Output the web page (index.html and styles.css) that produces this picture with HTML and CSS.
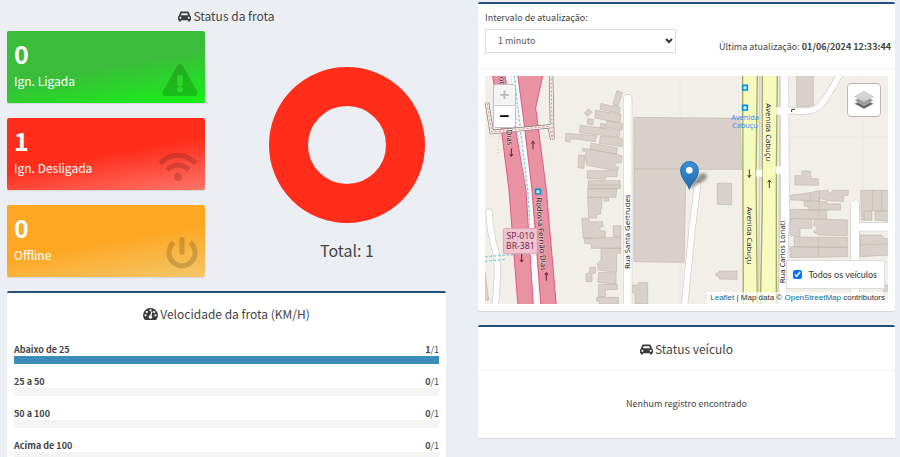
FILE: index.html
```html
<!DOCTYPE html>
<html lang="pt-BR">
<head>
<meta charset="utf-8">
<meta name="viewport" content="width=device-width, initial-scale=1">
<title>Status da frota</title>
<link rel="stylesheet" href="styles.css">
</head>
<body>
<svg class="defs" aria-hidden="true">
  <symbol id="car" viewBox="0 0 39 32">
    <path fill-rule="evenodd" d="M10 1h19q3 0 4 3l3 9q3 2 3 5v9h-3v2q0 3-3 3t-3-3v-2H9v2q0 3-3 3t-3-3v-2H0v-9q0-3 3-5l3-9q1-3 4-3zM9 12h21l-2-6H11zM7 17a3 3 0 1 0 .1 0zM32 17a3 3 0 1 0 .1 0z"/>
  </symbol>
</svg>
<main class="page">
  <div class="column">
    <section class="fleet">
      <h2 class="title"><svg class="icon-car"><use href="#car"/></svg>Status da frota</h2>
      <div class="fleet-grid">
        <div class="cards">
          <div class="card card-on">
            <strong>0</strong><span>Ign. Ligada</span>
            <svg class="card-icon icon-warning" viewBox="0 0 36 32"><path fill-rule="evenodd" d="M15.500 1.500q2.500-3 5 0L35 27q2 4-2 5H3q-4-1-2-5zM15 11l.5 11h5l.5-11zM18 22.500a3 3 0 1 0 .1 0z"/></svg>
          </div>
          <div class="card card-off">
            <strong>1</strong><span>Ign. Desligada</span>
            <svg class="card-icon icon-wifi" viewBox="0 0 40 28"><circle cx="20" cy="24" r="4"/><path class="line" d="M2 10.500q18-17 36 0M9 17q11-10 22 0"/></svg>
          </div>
          <div class="card card-offline">
            <strong>0</strong><span>Offline</span>
            <svg class="card-icon icon-power" viewBox="0 0 32 32"><path class="line" d="M8 5.500a13 13 0 1 0 16 0"/><path class="line round" d="M16 2.500v13"/></svg>
          </div>
        </div>
        <div class="chart">
          <svg viewBox="0 0 156 156" role="img" aria-label="Ign. Desligada: 1"><circle cx="78" cy="78" r="58.500"/></svg>
          <p>Total: 1</p>
        </div>
      </div>
    </section>
    <section class="box">
      <h2 class="title speed-title"><svg class="icon-gauge" viewBox="0 0 44 36"><path fill-rule="evenodd" d="M22 0a22 22 0 0 1 18.500 34q-1 2-3 2h-31q-2 0-3-2A22 22 0 0 1 22 0zM7 19a3 3 0 1 0 .1 0zM11 9a3 3 0 1 0 .1 0zM22 4a3 3 0 1 0 .1 0zM33 9a3 3 0 1 0 .1 0zM37 19a3 3 0 1 0 .1 0zM25 10l-4 12a5 5 0 1 0 4 1l3-12z"/></svg>Velocidade da frota (KM/H)</h2>
      <ul class="speeds">
        <li><div class="speed-row"><strong>Abaixo de 25</strong><span><b>1</b>/1</span></div><div class="bar"><div class="fill" style="width:100%"></div></div></li>
        <li><div class="speed-row"><strong>25 a 50</strong><span><b>0</b>/1</span></div><div class="bar"></div></li>
        <li><div class="speed-row"><strong>50 a 100</strong><span><b>0</b>/1</span></div><div class="bar"></div></li>
        <li><div class="speed-row"><strong>Acima de 100</strong><span><b>0</b>/1</span></div><div class="bar"></div></li>
      </ul>
    </section>
  </div>

  <div class="column column-map">
    <section class="box">
      <div class="toolbar">
        <div class="field">
          <label for="interval">Intervalo de atualização:</label>
          <div class="select-wrap">
            <select id="interval"><option>1 minuto</option></select>
            <svg viewBox="0 0 8 6"><path d="M1 1l3 3 3-3"/></svg>
          </div>
        </div>
        <p class="updated">Última atualização: <strong>01/06/2024 12:33:44</strong></p>
      </div>
      <div class="map-body">
        <div class="map">
          <svg class="tiles" viewBox="0 0 1209 684" preserveAspectRatio="xMidYMid slice">
            <rect class="land" width="1209" height="684"/>
            <g class="grid-line"><path d="M585 0v684M0 184h1209M1135 0v684"/></g>

            <!-- houses, north-west -->
            <g class="building" transform="translate(-15 -18)">
              <path d="M411 62l17 6-14 40-16-6zM324 117l13 10-15 12-9-9zM363 100l32 8 6-2 19 6-2 18-58-12zM347 121l76 12-3 25-76-14zM323 146l18 2-2 16-18-2zM381 152l47 9-2 19-48-8zM301 166l51 6 68 10-3 20-119-14zM362 160l15 2-2 14-15-2zM258 190l92 7-4 18-54-7-20-1-2 9-14-2zM362 198l65 8-1 24-68-10zM333 219l79 15-2 18-80-14zM308 235l17 2 85 15 16 6-2 20-19 2v10l11 2-2 8-29-2-65-12-4-24 2-18-12-1zM296 256h18l-2 39-18-1zM322 302h90v18h-34l-2 8-54-2zM325 332h95v23h-95z"/>
            </g>
            <!-- houses, south-west -->
            <g class="building" transform="translate(-15 327)">
              <path d="M325 0h95v10h-95zM323 12h87l-2 25h-85zM323 37l43 1-1 32-3 0v18h-12v12l-24-2zM372 38h14v10h-14zM305 100h21l2 10h40l2 15h-10v12l16 1v19l-66 3zM400 122h23l-1 33h-22zM312 160l110-3v33h-88v-13l-20-2zM363 190h59v15h-12v57l-55-7-3-20 11-10zM330 247h18l-2 17-10 2v24h-18v-24l10-2zM356 262l52 2v33l-54-5zM356 298h56v15l-36 2v20h-20zM350 337h65v20h-57v-9h-8zM457 300h18v-7h28v64h-38v-32l-8-3zM15 262l11 83H10z"/>
            </g>
            <path class="building" d="M447 124l318 3 5 153H603l-6 279-150-2zM447 279h156"/>
            <!-- houses, east -->
            <g class="building" transform="translate(600 162)">
              <path d="M97 160h43v65l-43-2zM330 137h21v-14h25l2 22 23 2-1 19-70-1zM317 195l28-2 30-5 28-6h27v11l15-12h45l-1 15-14 1v17l-45-2-27-7v8l-86-3zM375 188v24M358 213l67 2 2 7h40l-1 18h-96v-10l-12-2zM317 238l108 2v28H317zM403 182v80M527 181h90v62l-57-1v28h-31zM563 181v61M590 181v61"/>
            </g>
            <g class="building" transform="translate(600 417)">
              <path d="M92 175l11-3v-4h53v25l-53-1v-7l-10-3zM315 10l65 2v28h-35v25l-30-3zM390 12l97 3v47l-87-2-15-10 15-10-15-10zM328 67h159v30l-87 0-72-2zM315 95l172 2v28l-172 3zM400 67v60M537-12h23v27h-23zM570-12h47v32l-47-5zM525 60h65l5 10 22 2v48l-92 5zM525 90l84-4M596 210h20v40h-20z"/>
            </g>
            <path class="building" d="M935-4h50v94l-50 4z"/>

            <!-- minor streets -->
            <g class="casing">
              <path d="M12 408q4 70 18 110t0 180M638 325l-14 110-26 260M897 104h30c70 8 80-14 105-52l36-62"/>
            </g>
            <path class="casing-wide" d="M428 68V700M898-10l2 420-3 90-8 200M1110 385v310M1110 452h110"/>
            <g class="street">
              <path d="M12 408q4 70 18 110t0 180M638 325l-14 110-26 260M897 104h30c70 8 80-14 105-52l36-62"/>
            </g>
            <path class="street-wide" d="M428 68V700M898-10l2 420-3 90-8 200M1110 385v310M1110 452h110"/>

            <!-- avenue -->
            <g class="avenue">
              <path d="M773-5h44l-4 300 4 395h-42zM832-5h45l-3 300v395h-48l6-300z"/>
            </g>
            <path class="kerb" d="M824-5v300l-4 395M884-5v300l-4 395"/>
            <path class="link" d="M814 292h18M872 282h22M874 105h22"/>

            <!-- highway -->
            <path class="verge" d="M60-5l34 180 28 180 16 335h24L142 342 118 132 98-5z"/>
            <g class="highway">
              <path d="M22-5h37l33 167 31 180 22 348h-46L72 342 50 168zM98-5h76l-22 101 32 246 30 348h-46L141 342 116 132z"/>
            </g>
            <g class="cycle">
              <path d="M88 0l18 160 22 182 6 90M0 542l160-12M0 556l60-6"/>
            </g>
            <path class="dots" d="M78 0l20 160 22 182M28 70l16 90-6 80"/>
            <path class="bridge-casing" d="M198-5l4 196-8-40L20 168 6 80"/>
            <path class="bridge" d="M198-5l4 196-8-40L20 168 6 80"/>
            <path class="bridge-dots" d="M198-5l4 196-8-40L20 168 6 80"/>

            <!-- direction arrows -->
            <g class="arrow">
              <path d="M79 217v24m-5-7l5 7 5-7M144 220v-24m-5 7l5-7 5 7M110 534v24m-5-7l5 7 5-7M184 614v-24m-5 7l5-7 5 7"/>
            </g>
            <g class="arrow arrow-dark">
              <path d="M793 280v24m-5-7l5 7 5-7M853 336v-24m-5 7l5-7 5 7M920 108v-8h10"/>
            </g>

            <g class="stop">
              <path d="M773 28h14v14h-14zM773 88h14v14h-14zM152 340h14v14h-14z"/>
            </g>
            <g class="stop-label"><text x="780" y="132">Avenida</text><text x="780" y="157">Cabuçu</text></g>

            <rect class="shield" x="55" y="457" width="102" height="76" rx="5"/>
            <g class="shield-text"><text x="106" y="490">SP-010</text><text x="106" y="520">BR-381</text></g>

            <g class="street-name">
              <text transform="translate(843 82) rotate(90)">Avenida Cabuçu</text>
              <text transform="translate(785 392) rotate(90)">Avenida Cabuçu</text>
              <text transform="translate(901 622) rotate(-90)">Rua Carlos Lonati</text>
              <text transform="translate(435 579) rotate(-90)">Rua Santa Gertrudes</text>
              <text transform="translate(153 365) rotate(86)">Rodovia Fernão Dias</text>
              <text transform="translate(64 162) rotate(86)">Dias</text>
              <text transform="translate(42 3) rotate(84)">od</text>
            </g>
            <defs>
              <linearGradient id="pin" x2="0" y2="1"><stop stop-color="#3a93d6"/><stop offset="1" stop-color="#1f68ab"/></linearGradient>
              <filter id="soft"><feGaussianBlur stdDeviation="5"/></filter>
            </defs>
            <path class="pin-shadow" d="M614 338l22-34q14-18 26-10t-8 22z"/>
            <path class="pin" d="M613 340c-4-16-26-32-26-57a26 26 0 0 1 53 0c0 25-23 41-27 57z"/>
            <circle class="pin-eye" cx="613" cy="283" r="10"/>
          </svg>
          <div class="zoom">
            <button type="button" disabled aria-label="Aproximar">+</button>
            <button type="button" aria-label="Afastar">−</button>
          </div>
          <button class="layers" type="button" aria-label="Camadas">
            <svg viewBox="0 0 60 54"><path fill="#666" d="M2 38l28-14 28 14-28 15z"/><path fill="#999" stroke="#fff" d="M1 28l29-14 29 14-29 16z"/><path fill="#d2d2d2" stroke="#aaa" d="M1 17L30 1l29 16-29 16z"/></svg>
          </button>
          <div class="map-foot">
            <label class="all"><input type="checkbox" checked>Todos os veículos</label>
            <div class="credit"><a href="#">Leaflet</a> | Map data © <a href="#">OpenStreetMap</a> contributors</div>
          </div>
        </div>
      </div>
    </section>
    <section class="box">
      <h2 class="title vehicle-title"><svg class="icon-car"><use href="#car"/></svg>Status veículo</h2>
      <p class="empty">Nenhum registro encontrado</p>
    </section>
  </div>
</main>
</body>
</html>
```
FILE: styles.css
```css
* { box-sizing: border-box; }
html { height: 100%; overflow: hidden; }
body {
  margin: 0;
  background: #ebeef3;
  color: #444;
  font: 9px/12px "Noto Sans CJK SC", "Noto Sans", sans-serif;
}
h2, p, ul { margin: 0; padding: 0; }
.defs { position: absolute; width: 0; height: 0; }

.page {
  display: grid;
  grid-template-columns: 439fr 417fr;
  gap: 32px;
  align-items: start;
  padding: 0 5px 0 7px;
}
.column { display: flex; flex-direction: column; gap: 14px; min-width: 0; }
.column-map { padding-top: 2px; }

.box {
  background: #fff;
  border-top: 2px solid #24507a;
  border-radius: 2px;
  box-shadow: 0 1px 1px rgba(0, 0, 0, .1);
}
.title {
  display: flex;
  justify-content: center;
  align-items: center;
  gap: 2px;
  font-size: 12px;
  line-height: 16px;
  font-weight: 400;
}
.title svg { fill: #3c3c3c; }
.icon-car { width: 13px; height: 11px; }
.icon-gauge { width: 15px; height: 12px; }

.fleet { padding-top: 8px; }
.fleet-grid {
  display: grid;
  grid-template-columns: 1fr 1fr;
  gap: 43px;
  margin-top: 7px;
}
.cards { display: flex; flex-direction: column; gap: 15px; }
.card {
  position: relative;
  display: flex;
  flex-direction: column;
  height: 72px;
  padding: 9px 7px;
  border-radius: 2px;
  box-shadow: 0 1px 1px rgba(0, 0, 0, .1);
  color: #fff;
}
.card strong { font-size: 25px; line-height: 26px; }
.card span { margin-top: 7px; font-size: 12px; line-height: 16px; }
.card-on { background: linear-gradient(170deg, #3bbd3b 50%, #14f214); }
.card-off { background: linear-gradient(170deg, #ff2d1a 50%, #ff766b); }
.card-offline { background: linear-gradient(170deg, #fea722 50%, #f3c76a); }
.card-icon { position: absolute; right: 7px; fill: #000; opacity: .16; }
.card-icon .line { fill: none; stroke: #000; stroke-width: 5; }
.card-icon .round { stroke-linecap: round; }
.icon-warning { width: 36px; height: 32px; bottom: 7px; }
.icon-wifi { width: 40px; height: 28px; bottom: 9px; }
.icon-power { width: 32px; height: 32px; bottom: 8px; }

.chart { display: flex; flex-direction: column; align-items: center; padding-top: 36px; }
.chart svg { width: 156px; height: 156px; }
.chart circle { fill: none; stroke: #ff2d1a; stroke-width: 39; }
.chart p { margin-top: 17px; font-size: 16px; line-height: 20px; }

.speed-title { padding: 13px 0; }
.speeds { list-style: none; padding: 9px 7px; }
.speeds li { margin-bottom: 12px; }
.speed-row { display: flex; justify-content: space-between; }
.bar { height: 8px; background: #f4f4f4; }
.fill { height: 100%; background: #3c8dbc; }

.toolbar {
  display: flex;
  justify-content: space-between;
  align-items: flex-end;
  padding: 8px 4px 15px 7px;
  border-bottom: 1px solid #f4f4f4;
}
.field { width: 191px; }
.field label { display: block; margin-bottom: 5px; }
.select-wrap { position: relative; }
.select-wrap select {
  display: block;
  width: 100%;
  height: 24px;
  padding: 0 12px;
  appearance: none;
  border: 1px solid #d8dce4;
  border-radius: 0;
  background: #fff;
  color: #555;
  font: inherit;
}
.select-wrap svg {
  position: absolute;
  right: 3px;
  top: 9px;
  width: 8px;
  height: 6px;
  fill: none;
  stroke: #333;
  stroke-width: 2;
  pointer-events: none;
}
.updated { white-space: nowrap; }

.map-body { padding: 7px; }
.map { position: relative; height: 228px; overflow: hidden; }
.tiles { display: block; width: 100%; height: 100%; font-family: "Noto Sans", sans-serif; }
.land { fill: #f2efe9; }
.grid-line { stroke: #e9e6e0; stroke-width: 2; }
.building { fill: #d9d0c9; stroke: #c4b6ab; stroke-width: 2; }
.casing, .casing-wide, .street, .street-wide, .kerb, .link { fill: none; stroke-linecap: round; }
.casing { stroke: #cfcdca; stroke-width: 21; }
.casing-wide { stroke: #cfcdca; stroke-width: 28; }
.street { stroke: #fff; stroke-width: 17; }
.street-wide { stroke: #fff; stroke-width: 24; }
.kerb { stroke: #d4d2cd; stroke-width: 5; }
.link { stroke: #fff; stroke-width: 22; stroke-linecap: butt; }
.avenue { fill: #f7fabf; stroke: #a3ad5c; stroke-width: 4; }
.verge { fill: #fafafa; }
.highway { fill: #e892a2; stroke: #dc5a86; stroke-width: 3; }
.cycle { fill: none; stroke: #86cbd8; stroke-width: 4; stroke-dasharray: 8 5; }
.dots { fill: none; stroke: #f2a39b; stroke-width: 3; stroke-dasharray: 3 7; }
.bridge-casing { fill: none; stroke: #777; stroke-width: 13; }
.bridge { fill: none; stroke: #f6f3f0; stroke-width: 9; }
.bridge-dots { fill: none; stroke: #e98d86; stroke-width: 3; stroke-dasharray: 7 5; }
.arrow { fill: none; stroke: #6b1839; stroke-width: 3; }
.arrow-dark { stroke: #3f4415; }
.stop { fill: #d7f0fa; stroke: #0092da; stroke-width: 5; }
.stop-label { fill: #3d88f5; font-size: 22px; text-anchor: middle; }
.shield { fill: #eec4cf; stroke: #d991a6; stroke-width: 2; }
.shield-text { fill: #76284a; font-size: 26px; text-anchor: middle; }
.street-name { fill: #222; font-size: 23px; stroke: #fff; stroke-width: 3; stroke-opacity: .5; paint-order: stroke; }
.pin { fill: url(#pin); stroke: #2468a5; stroke-width: 3; }
.pin-eye { fill: #fff; }
.pin-shadow { fill: #000; opacity: .4; filter: url(#soft); }

.zoom {
  position: absolute;
  left: 8px;
  top: 8px;
  display: flex;
  flex-direction: column;
  width: 23px;
  border: 1px solid #c4bfba;
  border-radius: 3px;
  overflow: hidden;
}
.zoom button {
  height: 21px;
  padding: 0;
  border: 0;
  background: #fff;
  color: #000;
  font: bold 17px/20px "Liberation Sans", sans-serif;
}
.zoom button:disabled { border-bottom: 1px solid #ccc; background: #f4f4f4; color: #bbb; }
.layers {
  position: absolute;
  right: 7px;
  top: 7px;
  display: grid;
  place-items: center;
  width: 34px;
  height: 34px;
  padding: 0;
  border: 1px solid #bcb8b3;
  border-radius: 4px;
  background: #fff;
}
.layers svg { width: 20px; height: 18px; }
.map-foot {
  position: absolute;
  right: 0;
  bottom: 0;
  display: flex;
  flex-direction: column;
  align-items: flex-end;
  gap: 3px;
}
.all {
  display: flex;
  align-items: center;
  gap: 6px;
  height: 29px;
  margin-right: 3px;
  padding: 0 7px 0 6px;
  border: 1px solid #ddd;
  background: #fff;
  color: #333;
  font-family: Lato, sans-serif;
}
.all input { width: 9px; height: 9px; margin: 0; accent-color: #0075ff; }
.credit {
  padding: 0 3px;
  background: rgba(255, 255, 255, .7);
  color: #333;
  font: 8px/12px "Liberation Sans", Arial, sans-serif;
}
.credit a { color: #0078a8; text-decoration: none; }

.vehicle-title { padding: 14px 0 13px; border-bottom: 1px solid #f4f4f4; }
.empty { padding: 27px 0 28px; text-align: center; }
```
